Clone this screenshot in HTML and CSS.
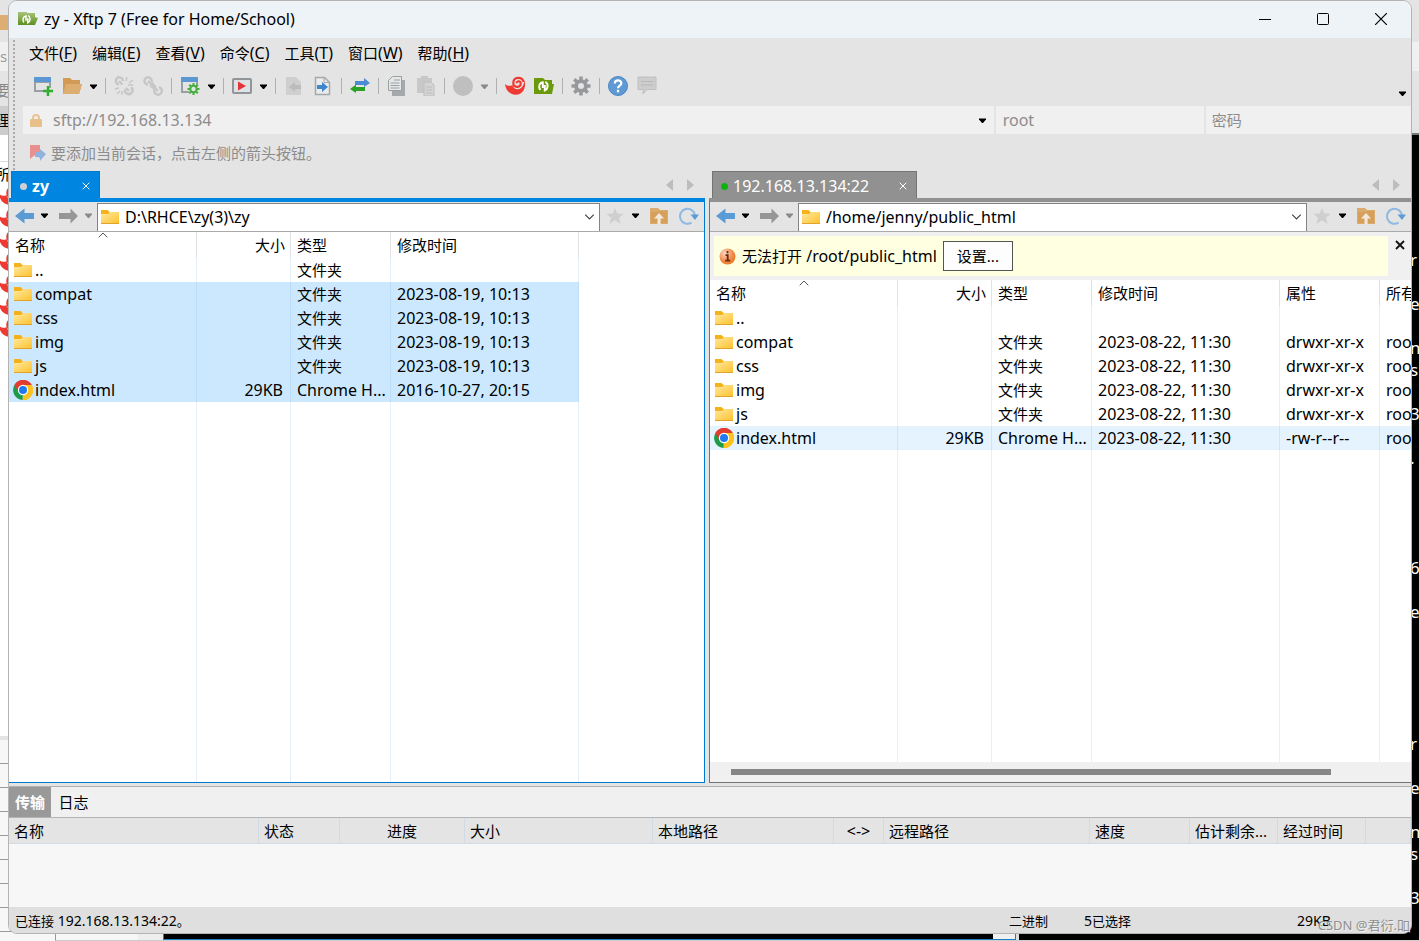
FILE: index.html
```html
<!DOCTYPE html>
<html lang="zh-CN">
<head>
<meta charset="utf-8">
<title>zy - Xftp 7 (Free for Home/School)</title>
<link rel="stylesheet" href="styles.css">
</head>
<body>
<svg class="defs" aria-hidden="true">
  <defs>
    <linearGradient id="fg" x1="0" y1="0" x2="1" y2="1"><stop offset="0" stop-color="#ffe9a3"/><stop offset="1" stop-color="#fdc32f"/></linearGradient>
    <radialGradient id="og" cx=".35" cy=".3" r=".8"><stop offset="0" stop-color="#ffd9c4"/><stop offset=".6" stop-color="#f08a4a"/><stop offset="1" stop-color="#e8761a"/></radialGradient>
    <linearGradient id="gg" x1="0" y1="0" x2="0" y2="1"><stop offset="0" stop-color="#a9c47a"/><stop offset="1" stop-color="#5f8f23"/></linearGradient>
  </defs>
  <symbol id="folder" viewBox="0 0 18 14"><path d="M0 0h6.500l2 2H18v11.500H0z" fill="#f6b21b"/><path d="M0 4h7l2-2h9v11H0z" fill="url(#fg)"/><path d="M0 13h18v1H0z" fill="#e3a32a"/></symbol>
  <symbol id="chrome" viewBox="0 0 20 20"><path d="M10 10 1.500 5A10 10 0 0 1 18.700 5z" fill="#e33b2e"/><path d="M10 10 18.700 5A10 10 0 0 1 9.600 20z" fill="#fcc31e"/><path d="M10 10 9.600 20A10 10 0 0 1 1.400 5z" fill="#1e9b48"/><path d="M10 5h8.700A10 10 0 0 1 9.600 20l4.700-7.500z" fill="#fcc31e"/><path d="M1.400 5 5.700 12.500A5 5 0 0 1 10 5h8.700A10 10 0 0 0 1.400 5z" fill="#e33b2e"/><circle cx="10" cy="10" r="5.200" fill="#fff"/><circle cx="10" cy="10" r="4" fill="#2079ee"/></symbol>
  <symbol id="back" viewBox="0 0 19 16"><path d="M0 8 9.500.500V5H19v6H9.500v4.500z" fill="currentColor"/></symbol>
  <symbol id="forward" viewBox="0 0 19 16"><path d="M19 8 11.500 .5V5H0v6h11.500v4.500z" fill="currentColor"/></symbol>
  <symbol id="caret" viewBox="0 0 7 5"><path d="M0 .5h7v1L4 5H3L0 1.500z" fill="currentColor"/></symbol>
  <symbol id="chev" viewBox="0 0 10 6"><path d="m.7.7 4.300 4.300L9.300.7" fill="none" stroke="#444" stroke-width="1.200"/></symbol>
  <symbol id="star" viewBox="0 0 18 16"><path d="m9 0 2.400 5.500 6.300.3-4.700 3.900L14.600 16 9 12.300 3.400 16 5 9.700.3 5.800l6.300-.3z" fill="#cfcfcf"/></symbol>
  <symbol id="upfolder" viewBox="0 0 18 16"><path d="M0 0h8l2 2h8v14H0z" fill="#d9ab6c"/><path d="M1 4h7l2-1h7v12H1z" fill="#d6a05a"/><path d="m9 5 5 5.500h-3.400V16H7.500v-5.500H4z" fill="#f1e9de"/></symbol>
  <symbol id="refresh" viewBox="0 0 20 18"><path d="M12.500 15.700A7.500 7.500 0 1 1 16 8.500" fill="none" stroke="#8db9e2" stroke-width="2"/><path d="M11.500 7.500H20L16 13z" fill="#5a9ad6"/></symbol>
  <symbol id="swirl" viewBox="0 0 20 20"><path d="M0 8c2 2 5 2.500 7.500 1 .5 4 5 5.500 8.500 3 2-1.500 3-4 3.500-8 1.500 6 0 11-4 13.500C9.500 21 1 17.500 0 8z" fill="#ee3a32"/><path d="M18.500 6C17.500.500 8.500 0 8.300 7c0 5 7.400 5.300 7.400.7 0-3.200-4-3.200-4-.4" fill="none" stroke="#ee3a32" stroke-width="2.200"/></symbol>
  <symbol id="greenfolder" viewBox="0 0 20 18"><path d="M0 1h9l2 2h7v4h2l-2 10H0z" fill="#6a9a0c"/><path d="M6.300 13C4 9.500 5.300 5.800 8.800 5.300V11M11.500 4.800C14.800 7.500 14 12 10.800 13.500V8" fill="none" stroke="#fff" stroke-width="1.900"/></symbol>
  <symbol id="gear" viewBox="0 0 20 20"><g stroke="currentColor" stroke-width="3.500"><path d="M10 .5v19M.5 10h19M3.300 3.300l13.400 13.400M16.700 3.300 3.300 16.700"/></g><circle cx="10" cy="10" r="6.800" fill="currentColor"/><circle cx="10" cy="10" r="3" fill="#e4e4e4"/></symbol>
  <symbol id="tri-l" viewBox="0 0 7 12"><path d="M7 0v12L0 6z" fill="#bdbdbd"/></symbol>
  <symbol id="tri-r" viewBox="0 0 7 12"><path d="M0 0v12L7 6z" fill="#bdbdbd"/></symbol>
  <symbol id="x" viewBox="0 0 8 8"><path d="m.7.7 6.600 6.600M7.300.7.7 7.300" fill="none" stroke="currentColor"/></symbol>
  <symbol id="up" viewBox="0 0 10 6"><path d="M.7 5.300 5 1l4.300 4.300" fill="none" stroke="#555"/></symbol>
</svg>

<div class="desktop">
  <div class="behind-left" aria-hidden="true">
    <i class="bl-folder"></i><span class="bl-s">s</span><span class="bl-yao">要</span><span class="bl-li">理</span><span class="bl-suo">所</span>
    <div class="swirls">
      <svg><use href="#swirl"/></svg><svg><use href="#swirl"/></svg><svg><use href="#swirl"/></svg><svg><use href="#swirl"/></svg><svg><use href="#swirl"/></svg><svg><use href="#swirl"/></svg><svg><use href="#swirl"/></svg>
    </div>
    <div class="bl-lines"></div>
  </div>
  <div class="behind-right" aria-hidden="true">
    <pre class="term">r

e

n
s

3

.




6

e





r

e

n
s

3</pre>
  </div>
  <div class="behind-bottom" aria-hidden="true"><i class="bb-a"></i><i class="bb-b"></i><i class="bb-c"></i><i class="bb-d"></i></div>

  <main class="window">
    <header class="titlebar">
      <svg class="appicon" viewBox="0 0 20 16"><path d="M0 1h8l2 1h7v4l3 1-3 7H0z" fill="url(#gg)"/><path d="M5.800 11.500C4 8.500 5.200 5.500 8 5v4.800M10.200 4.500C13 6.800 12.500 10.500 9.800 11.800V7.200" fill="none" stroke="#fff" stroke-width="1.500"/></svg>
      <h1>zy - Xftp 7 (Free for Home/School)</h1>
      <div class="winbtns">
        <button aria-label="最小化"><svg viewBox="0 0 12 12"><path d="M0 6.500h12" stroke="#000"/></svg></button>
        <button aria-label="最大化"><svg viewBox="0 0 12 12"><rect x=".5" y=".5" width="11" height="11" rx="1" fill="none" stroke="#000"/></svg></button>
        <button aria-label="关闭"><svg viewBox="0 0 12 12"><path d="m0 0 12 12M12 0 0 12" stroke="#000" stroke-width="1.200"/></svg></button>
      </div>
    </header>

    <div class="bars">
      <nav class="menu">
        <button><span class="zh">文件</span>(<u>F</u>)</button><button><span class="zh">编辑</span>(<u>E</u>)</button><button><span class="zh">查看</span>(<u>V</u>)</button><button><span class="zh">命令</span>(<u>C</u>)</button><button><span class="zh">工具</span>(<u>T</u>)</button><button><span class="zh">窗口</span>(<u>W</u>)</button><button><span class="zh">帮助</span>(<u>H</u>)</button>
      </nav>
      <div class="toolbar">
        <div class="group">
          <button aria-label="新建"><svg viewBox="0 0 20 20"><path d="M2 1v14h9M17 6v6M2 6h15" fill="none" stroke="#9a9fa3" stroke-width="2"/><path d="M1 1h17v5H1z" fill="#5b97d3"/><path d="M15 10v10M10 15h10" stroke="#2fae2f" stroke-width="2.500"/></svg></button>
          <button aria-label="打开"><svg viewBox="0 0 20 20"><path d="M1 2h7l2 2h8v4h2l-3 10H1z" fill="#d39a56"/><path d="M4 8h16l-3 10H1z" fill="#dcae72"/></svg></button>
          <button class="drop" aria-label="打开列表"><svg><use href="#caret"/></svg></button>
        </div>
        <div class="group">
          <button aria-label="断开"><svg viewBox="0 0 20 20"><g fill="none" stroke="#c6c6c6" stroke-width="2.400"><path d="M9 5A3.600 3.600 0 1 0 5 8.500M11 13.500a3.800 3.800 0 1 0 6-2.200M5 5l3.500 3.500M12 12l3 3"/><path d="m13 1-1 4M19 4l-4 3M14 9h5M1 13l4-1M3 18l3-3M8 19v-4" stroke-width="1.500"/></g></svg></button>
          <button aria-label="连接"><svg viewBox="0 0 20 20"><g fill="none" stroke="#c6c6c6" stroke-width="2.400"><path d="M8.500 6A3.600 3.600 0 1 0 5 8.500M11.500 13.500a3.800 3.800 0 1 0 4.500-2.300M5 5l10 10"/><path d="M6.500 9.500 11 13M9 6.500l4 4.500" stroke-width="1.500"/></g></svg></button>
        </div>
        <div class="group">
          <button aria-label="属性"><svg viewBox="0 0 20 20"><path d="M2 1v15h7M17 6v4" fill="none" stroke="#9a9fa3" stroke-width="2"/><path d="M1 1h17v5H1z" fill="#5b97d3"/><g stroke="#42b03c" stroke-width="2"><path d="M13.500 7v12M7.500 13h12M9.300 8.800l8.500 8.500M17.800 8.800l-8.500 8.500"/></g><circle cx="13.500" cy="13" r="3.200" fill="#e4e4e4" stroke="#42b03c" stroke-width="2"/></svg></button>
          <button class="drop" aria-label="属性列表"><svg><use href="#caret"/></svg></button>
        </div>
        <div class="group">
          <button aria-label="执行"><svg viewBox="0 0 20 20"><rect x="1" y="3" width="18" height="14" rx="1" fill="#dfe2e4" stroke="#8f9598" stroke-width="2"/><path d="M6 5.500 14 10l-8 4.500z" fill="#e3343a"/></svg></button>
          <button class="drop" aria-label="执行列表"><svg><use href="#caret"/></svg></button>
        </div>
        <div class="group">
          <button aria-label="下载"><svg viewBox="0 0 20 20"><path d="M2 1h10l5 5v13H2z" fill="#cfcfcf"/><path d="m5 11 6-5v3h6v4h-6v3z" fill="#bcbcbc"/></svg></button>
          <button aria-label="上传"><svg viewBox="0 0 20 20"><path d="M2.500 1.500h9l5 5v12h-14z" fill="#e9ebec" stroke="#a3a8ab" stroke-width="1.500"/><path d="M11 1.500v5h5" fill="none" stroke="#a3a8ab"/><path d="m15 11-6-5v3H4v4h5v3z" fill="#3f86d0"/></svg></button>
        </div>
        <div class="group">
          <button aria-label="同步"><svg viewBox="0 0 20 20"><path d="M5 5h9V2l6 5-6 4V9H5z" fill="#4a8bd4"/><path d="M15 11H6V8.500L0 13l6 4v-2h9z" fill="#2da127"/></svg></button>
        </div>
        <div class="group">
          <button aria-label="复制"><svg viewBox="0 0 20 20"><path d="M5 4h13v16H5z" fill="#a5a9ac"/><path d="M5.500.5h9v14h-13v-10z" fill="#e6e7e8" stroke="#9a9fa2"/><path d="M3.500 7h9M3.500 9.500h9M3.500 12h9M7 4h6" stroke="#9a9fa2"/></svg></button>
          <button aria-label="粘贴"><svg viewBox="0 0 20 20"><path d="M1 2h4V0h7v2h4v15H1z" fill="#c8c8c8"/><path d="M8 6h7l3 3v11H8z" fill="#d4d4d4" stroke="#bebebe"/><path d="M10 11h6M10 14h6M10 17h6" stroke="#bebebe"/></svg></button>
        </div>
        <div class="group">
          <button aria-label="停止"><svg viewBox="0 0 20 20"><circle cx="10" cy="10" r="10" fill="#bfbfbf"/></svg></button>
          <button class="drop dim" aria-label="停止列表"><svg><use href="#caret"/></svg></button>
        </div>
        <div class="group">
          <button aria-label="Xshell"><svg><use href="#swirl"/></svg></button>
          <button aria-label="Xftp"><svg><use href="#greenfolder"/></svg></button>
        </div>
        <div class="group">
          <button class="gearbtn" aria-label="选项"><svg><use href="#gear"/></svg></button>
        </div>
        <div class="group">
          <button aria-label="帮助"><svg viewBox="0 0 20 20"><circle cx="10" cy="10" r="9.500" fill="#5f9ad4" stroke="#4a86c4"/><path d="M6.800 7.500c0-4.200 6.500-4 6.500-.3 0 2.500-3.300 2.300-3.300 5M10 13.800v2.400" fill="none" stroke="#fff" stroke-width="2.200"/></svg></button>
          <button aria-label="反馈"><svg viewBox="0 0 20 20"><path d="M1 1h18v12.500h-9L6 18v-4.500H1z" fill="#cdcdcd" stroke="#c0c0c0"/><path d="M4 5.500h12M4 9h12" stroke="#b8b8b8"/></svg></button>
        </div>
        <button class="drop more" aria-label="更多"><svg><use href="#caret"/></svg></button>
      </div>
      <div class="address">
        <div class="field host">
          <svg class="lock" viewBox="0 0 12 13"><path d="M3 6V4a3 3 0 0 1 6 0v2" fill="none" stroke="#e8c394" stroke-width="2"/><rect y="5" width="12" height="8" rx="1" fill="#e8c08a"/></svg>
          <input aria-label="地址" value="sftp://192.168.13.134">
          <button class="drop" aria-label="地址列表"><svg><use href="#caret"/></svg></button>
        </div>
        <div class="field user"><input aria-label="用户名" value="root"></div>
        <div class="field pass"><input class="zh" aria-label="密码" placeholder="密码"></div>
      </div>
      <div class="bookmark">
        <svg viewBox="0 0 16 16"><path d="M0 0h10v13l-5-3-5 4z" fill="#e98f8f"/><path d="m16 9-6-5v3H5v5h5v4z" fill="#8fb3dc"/></svg>
        <span class="zh">要添加当前会话，点击左侧的箭头按钮。</span>
      </div>
    </div>

    <div class="panes">
      <section class="pane local">
        <div class="tabs">
          <div class="tab"><i class="dot"></i><b>zy</b><button aria-label="关闭标签"><svg><use href="#x"/></svg></button></div>
          <div class="scrollers"><button aria-label="向左"><svg><use href="#tri-l"/></svg></button><button aria-label="向右"><svg><use href="#tri-r"/></svg></button></div>
        </div>
        <div class="body">
          <div class="nav">
            <div class="history"><button class="back" aria-label="后退"><svg><use href="#back"/></svg></button><button class="drop" aria-label="后退列表"><svg><use href="#caret"/></svg></button><button class="fwd" aria-label="前进"><svg><use href="#forward"/></svg></button><button class="drop dim" aria-label="前进列表"><svg><use href="#caret"/></svg></button></div>
            <div class="path"><svg class="fold"><use href="#folder"/></svg><input aria-label="本地路径" value="D:\RHCE\zy(3)\zy"><button aria-label="路径列表"><svg><use href="#chev"/></svg></button></div>
            <div class="tools"><button class="star" aria-label="收藏"><svg><use href="#star"/></svg></button><button class="drop" aria-label="收藏列表"><svg><use href="#caret"/></svg></button><button class="upf" aria-label="上一级"><svg><use href="#upfolder"/></svg></button><button class="ref" aria-label="刷新"><svg><use href="#refresh"/></svg></button></div>
          </div>
          <div class="list">
            <table class="files">
              <colgroup><col class="c-name"><col class="c-size"><col class="c-type"><col class="c-time"><col></colgroup>
              <thead><tr class="zh"><th>名称<svg class="sort"><use href="#up"/></svg></th><th class="num">大小</th><th>类型</th><th>修改时间</th><th class="end"></th></tr></thead>
              <tbody>
                <tr><td><div class="file"><svg class="fold"><use href="#folder"/></svg>..</div></td><td></td><td class="zh">文件夹</td><td></td><td class="end"></td></tr>
                <tr class="sel"><td><div class="file"><svg class="fold"><use href="#folder"/></svg>compat</div></td><td></td><td class="zh">文件夹</td><td>2023-08-19, 10:13</td><td class="end"></td></tr>
                <tr class="sel"><td><div class="file"><svg class="fold"><use href="#folder"/></svg>css</div></td><td></td><td class="zh">文件夹</td><td>2023-08-19, 10:13</td><td class="end"></td></tr>
                <tr class="sel"><td><div class="file"><svg class="fold"><use href="#folder"/></svg>img</div></td><td></td><td class="zh">文件夹</td><td>2023-08-19, 10:13</td><td class="end"></td></tr>
                <tr class="sel"><td><div class="file"><svg class="fold"><use href="#folder"/></svg>js</div></td><td></td><td class="zh">文件夹</td><td>2023-08-19, 10:13</td><td class="end"></td></tr>
                <tr class="sel"><td><div class="file"><svg class="chr"><use href="#chrome"/></svg>index.html</div></td><td class="num">29KB</td><td>Chrome H...</td><td>2016-10-27, 20:15</td><td class="end"></td></tr>
                <tr class="fill"><td></td><td></td><td></td><td></td><td class="end"></td></tr>
              </tbody>
            </table>
          </div>
        </div>
      </section>

      <section class="pane remote">
        <div class="tabs">
          <div class="tab"><i class="dot"></i><span>192.168.13.134:22</span><button aria-label="关闭标签"><svg><use href="#x"/></svg></button></div>
          <div class="scrollers"><button aria-label="向左"><svg><use href="#tri-l"/></svg></button><button aria-label="向右"><svg><use href="#tri-r"/></svg></button></div>
        </div>
        <div class="body">
          <div class="nav">
            <div class="history"><button class="back" aria-label="后退"><svg><use href="#back"/></svg></button><button class="drop" aria-label="后退列表"><svg><use href="#caret"/></svg></button><button class="fwd" aria-label="前进"><svg><use href="#forward"/></svg></button><button class="drop dim" aria-label="前进列表"><svg><use href="#caret"/></svg></button></div>
            <div class="path"><svg class="fold"><use href="#folder"/></svg><input aria-label="远程路径" value="/home/jenny/public_html"><button aria-label="路径列表"><svg><use href="#chev"/></svg></button></div>
            <div class="tools"><button class="star" aria-label="收藏"><svg><use href="#star"/></svg></button><button class="drop" aria-label="收藏列表"><svg><use href="#caret"/></svg></button><button class="upf" aria-label="上一级"><svg><use href="#upfolder"/></svg></button><button class="ref" aria-label="刷新"><svg><use href="#refresh"/></svg></button></div>
          </div>
          <div class="notice">
            <div class="msg">
              <svg viewBox="0 0 17 17"><circle cx="8.500" cy="8.500" r="8" fill="url(#og)"/><path d="M8.500 3v2.300M6.500 7.200h2.200v5.300M6.200 12.700h5" stroke="#6b2a10" stroke-width="1.800" fill="none"/></svg>
              <span><span class="zh">无法打开</span> /root/public_html</span>
              <button class="zh">设置...</button>
            </div>
            <button class="close" aria-label="关闭提示"><svg viewBox="0 0 10 10"><path d="m1 1 8 8M9 1 1 9" stroke="#111" stroke-width="1.800"/></svg></button>
          </div>
          <div class="list">
            <table class="files">
              <colgroup><col class="c-name"><col class="c-size"><col class="c-type"><col class="c-time"><col class="c-type"><col></colgroup>
              <thead><tr class="zh"><th>名称<svg class="sort"><use href="#up"/></svg></th><th class="num">大小</th><th>类型</th><th>修改时间</th><th>属性</th><th class="end">所有者</th></tr></thead>
              <tbody>
                <tr><td><div class="file"><svg class="fold"><use href="#folder"/></svg>..</div></td><td></td><td></td><td></td><td></td><td class="end"></td></tr>
                <tr><td><div class="file"><svg class="fold"><use href="#folder"/></svg>compat</div></td><td></td><td class="zh">文件夹</td><td>2023-08-22, 11:30</td><td>drwxr-xr-x</td><td class="end">root</td></tr>
                <tr><td><div class="file"><svg class="fold"><use href="#folder"/></svg>css</div></td><td></td><td class="zh">文件夹</td><td>2023-08-22, 11:30</td><td>drwxr-xr-x</td><td class="end">root</td></tr>
                <tr><td><div class="file"><svg class="fold"><use href="#folder"/></svg>img</div></td><td></td><td class="zh">文件夹</td><td>2023-08-22, 11:30</td><td>drwxr-xr-x</td><td class="end">root</td></tr>
                <tr><td><div class="file"><svg class="fold"><use href="#folder"/></svg>js</div></td><td></td><td class="zh">文件夹</td><td>2023-08-22, 11:30</td><td>drwxr-xr-x</td><td class="end">root</td></tr>
                <tr class="hot"><td><div class="file"><svg class="chr"><use href="#chrome"/></svg>index.html</div></td><td class="num">29KB</td><td>Chrome H...</td><td>2023-08-22, 11:30</td><td>-rw-r--r--</td><td class="end">root</td></tr>
                <tr class="fill"><td></td><td></td><td></td><td></td><td></td><td class="end"></td></tr>
              </tbody>
            </table>
          </div>
          <div class="hscroll"><div class="thumb"></div></div>
        </div>
      </section>
    </div>

    <section class="transfer">
      <div class="ttabs zh"><button class="on">传输</button><button>日志</button></div>
      <table class="queue">
        <colgroup><col class="q1"><col class="q2"><col class="q3"><col class="q4"><col class="q5"><col class="q6"><col class="q7"><col class="q8"><col class="q9"><col class="q9"><col></colgroup>
        <thead><tr class="zh"><th>名称</th><th>状态</th><th class="mid">进度</th><th>大小</th><th>本地路径</th><th class="mid swap">&lt;-&gt;</th><th>远程路径</th><th>速度</th><th>估计剩余...</th><th>经过时间</th><th></th></tr></thead>
      </table>
    </section>
    <footer class="status">
      <span class="st-main"><span class="zh">已连接</span> 192.168.13.134:22<span class="zh">。</span></span>
      <span class="st-mode"><span class="zh">二进制</span></span>
      <span class="st-sel">5<span class="zh">已选择</span></span>
      <span class="st-size">29KB</span>
    </footer>
  </main>
  <div class="watermark">CSDN @君衍.吅</div>
</div>
</body>
</html>
```
FILE: styles.css
```css
* { box-sizing: border-box; }
body {
  margin: 0;
  font: 16px/24px "Noto Sans", "Noto Sans CJK SC", sans-serif;
  color: #000;
  background: #fff;
}
button, input { font: inherit; color: inherit; border: 0; background: none; padding: 0; margin: 0; }
input { min-width: 0; outline: none; }
svg { display: block; }
.defs { position: absolute; width: 0; height: 0; }
.zh { font-size: 15px; }

.desktop {
  position: relative;
  display: flex;
  height: 100vh;
  min-height: 600px;
  padding: 0 7px 7px 8px;
  overflow: hidden;
}

/* strips of the windows behind */
.behind-left {
  position: absolute; left: 0; top: 0; bottom: 0; width: 60px; overflow: hidden;
  background: linear-gradient(#e4e4e4 42px, #f0f0f0 42px 71px, #e4e4e4 71px 106px, #ccc 106px 135px, #fff 135px 161px, #ddd 161px 162px, #fff 162px 736px, #e4e4e4 736px 740px, #f7f7f7 740px);
}
.behind-left span { position: absolute; left: -5px; font-size: 15px; }
.behind-left .bl-s { left: 0; top: 44px; color: #999; }
.behind-left .bl-yao { top: 78px; color: #888; }
.bl-li { top: 108px; }
.bl-suo { top: 162px; }
.bl-folder { position: absolute; left: 0; top: 15px; width: 9px; height: 15px; background: #dcae72; }
.swirls { position: absolute; left: -1px; top: 186px; display: grid; gap: 2px; }
.swirls svg { width: 20px; height: 20px; }
.bl-lines { position: absolute; left: 0; right: 0; top: 740px; bottom: 0; background: repeating-linear-gradient(transparent 0 23px, #999 23px 24px); }
.behind-right {
  position: absolute; right: 0; top: 0; bottom: 0; width: 20px; overflow: hidden;
  background: linear-gradient(#e4e4e4 42px, #f0f0f0 42px 71px, #e4e4e4 71px 133px, #777 133px 135px, #000 135px);
}
.term { position: absolute; left: 11px; top: 249px; margin: 0; font: 17px/22px "Noto Sans", sans-serif; color: #fff; }
.behind-bottom {
  position: absolute; left: 55px; right: 0; bottom: 0; height: 20px; display: flex;
  border-left: 1px solid #999; border-bottom: 1px solid #ccc; background: #f7f7f7;
}
.bb-a { width: 107px; background: linear-gradient(90deg, #f7f7f7 82px, #eee 82px); }
.bb-b { flex: 830; background: #000; border: solid #1a7fc4; border-width: 0 0 1px 1px; }
.bb-c { flex: 22; background: #f0f0f0; border: solid #1a7fc4; border-width: 0 1px 1px 0; }
.bb-d { flex: 400; background: #000; border-left: 3px solid #ddd; }

.window {
  position: relative;
  flex: 1;
  min-width: 0;
  display: flex;
  flex-direction: column;
  border: 1px solid #b4b4b4;
  border-radius: 9px;
  overflow: hidden;
  background: #e4e4e4;
}
.titlebar { display: flex; align-items: center; height: 37px; padding: 0 0 2px 9px; background: #eef3f8; }
.appicon { width: 20px; height: 16px; margin-right: 6px; }
h1 { flex: 1; margin: 0; font-size: 16px; font-weight: 400; }
.winbtns { display: flex; padding-right: 1px; }
.winbtns button { width: 58px; height: 34px; display: grid; place-items: center; }
.winbtns svg { width: 12px; height: 12px; }

.bars { padding-left: 14px; background: radial-gradient(circle at 1px 1px, #aaa 1px, transparent 1px) 4px 2px / 3px 4px repeat-y; }
.menu { display: flex; gap: 15px; padding: 3px 0 1px 6px; }
.menu u { text-underline-offset: 2px; }
.toolbar { display: flex; align-items: center; height: 40px; }
.group { display: flex; align-items: center; gap: 8px; padding-left: 8px; margin-right: 8px; border-left: 1px solid #b0b0b0; height: 16px; }
.group:first-child { border-left-color: transparent; padding-left: 9px; }
.group > button + button:not(.drop) { margin-left: 1px; }
.toolbar svg { width: 20px; height: 20px; }
.gearbtn { color: #96999c; }
.drop svg, .toolbar .drop svg { width: 7px; height: 5px; }
.dim { color: #8a8a8a; }
.more { margin: 14px 5px 0 auto; }

.address { display: grid; grid-template-columns: 970fr 208fr 205fr; gap: 2px; color: #8c8c8c; }
.field { min-width: 0; display: flex; align-items: center; height: 28px; background: #f0f0f0; padding: 0 7px; }
.field input { flex: 1; width: 100%; }
.field .drop { color: #000; margin-right: 1px; }
.pass { padding-left: 6px; }
.pass input::placeholder { color: #8c8c8c; opacity: 1; }
.lock { width: 12px; height: 13px; margin-right: 11px; }
.bookmark { display: flex; align-items: center; gap: 5px; height: 37px; padding-left: 7px; color: #8c8c8c; }
.bookmark svg { width: 16px; height: 16px; }

.panes { flex: 1; min-height: 0; display: grid; grid-template-columns: 696fr 702fr; gap: 4px; padding-bottom: 3px; }
.pane { min-width: 0; min-height: 0; display: flex; flex-direction: column; --accent: #0086e0; --edge: #0078d0; }
.remote { --accent: #919191; --edge: #747474; }
.tabs { display: flex; justify-content: space-between; padding-left: 2px; }
.remote .tabs { padding-left: 3px; }
.tab { display: flex; align-items: center; width: 89px; height: 27px; padding: 2px 9px 0 8px; background: var(--accent); border: 1px solid var(--edge); border-bottom: 0; color: #fff; }
.remote .tab { width: 205px; }
.dot { width: 7px; height: 7px; border-radius: 50%; background: #d0d0d0; margin-right: 5px; }
.remote .dot { background: #0eb10e; }
.tab button { margin-left: auto; }
.tab svg { width: 8px; height: 8px; }
.scrollers { display: flex; gap: 14px; padding-right: 11px; align-items: center; }
.scrollers svg { width: 7px; height: 12px; }
.body { flex: 1; min-height: 0; display: flex; flex-direction: column; border: 1px solid var(--edge); border-top: 4px solid var(--accent); border-left: 0; }
.remote .body { border-left: 1px solid var(--edge); border-right: 0; }
.nav { display: flex; height: 30px; border-bottom: 1px solid #aaa; }
.history { display: flex; align-items: center; width: 88px; padding: 0 0 2px 6px; gap: 7px; }
.history .fwd { margin-left: 4px; }
.back { color: #5b9bd5; }
.fwd { color: #969696; }
.back svg, .fwd svg { width: 19px; height: 16px; }
.path { flex: 1; min-width: 0; display: flex; align-items: center; margin-top: 1px; padding: 0 4px 1px 3px; background: #fff; border: 1px solid #848484; border-bottom: 0; }
.fold { width: 18px; height: 14px; margin-right: 3px; flex: none; }
.path .fold { margin-right: 6px; }
.path input { flex: 1; }
.path button svg { width: 11px; height: 6px; }
.tools { display: flex; align-items: center; width: 104px; padding: 0 0 2px 6px; gap: 8px; }
.star svg, .upf svg { width: 18px; height: 16px; }
.upf { margin-left: 3px; }
.ref { margin-left: 3px; }
.ref svg { width: 20px; height: 18px; }

.notice { display: flex; background: #f0f0f0; padding: 4px 0 4px 4px; }
.msg { flex: 1; display: flex; align-items: center; height: 40px; padding-left: 5px; background: #ffffe1; }
.msg svg { width: 17px; height: 17px; margin-right: 6px; }
.msg button { width: 70px; height: 30px; margin-left: 6px; background: #fdfdfd; border: 1px solid #555; }
.close { width: 23px; display: flex; justify-content: center; align-items: flex-start; padding-top: 4px; }
.close svg { width: 10px; height: 10px; }

.list { flex: 1; min-height: 0; overflow: hidden; background: #fff; }
table { border-collapse: separate; border-spacing: 0; table-layout: fixed; width: 100%; text-align: left; }
.files { height: 100%; }
th, td { font-weight: 400; padding: 0 6px; white-space: nowrap; overflow: hidden; }
.files th, .files td { border-right: 1px solid #e6f0fa; height: 24px; }
.files th { height: 26px; border-color: #e2e2e2; position: relative; }
.files .end { border-right: 0; }
.files .fill td { height: auto; }
.files .num { text-align: right; padding: 0 5px; }
.files td.num { padding: 0 7px; }
.files td:first-child { padding: 0 5px; }
.c-name { width: 188px; }
.c-size { width: 94px; }
.c-type { width: 100px; }
.c-time { width: 188px; }
.sort { position: absolute; left: 89px; top: 0; width: 10px; height: 6px; }
.file { display: flex; align-items: center; }
.chr { width: 20px; height: 20px; margin: 0 2px 0 -1px; }
.sel td:not(.end) { background: #cce8ff; border-color: #bcdcf8; }
.hot td { background: #e5f3ff; border-color: #d0e6f8; }
.hscroll { height: 20px; background: #f0f0f0; display: flex; align-items: center; padding: 0 80px 0 21px; }
.thumb { flex: 1; height: 6px; background: #868686; }

.transfer { height: 121px; background: #f7f7f7; border-top: 1px solid #b0b0b0; }
.ttabs { display: flex; height: 31px; background: #f0f0f0; border-bottom: 1px solid #b4b4b4; }
.ttabs button { width: 42px; }
.ttabs button + button { width: 45px; }
.ttabs .on { background: #999; color: #fff; font-weight: 700; }
.queue th { height: 26px; background: #e4e4e4; border: solid #d2dae4; border-width: 0 1px 1px 0; padding: 0 5px; }
.queue .mid { text-align: center; }
.queue .swap { font-size: 16px; }
.q1 { width: 250px; } .q2 { width: 81px; } .q3 { width: 125px; } .q4 { width: 188px; } .q5 { width: 181px; }
.q6 { width: 50px; } .q7 { width: 206px; } .q8 { width: 100px; } .q9 { width: 88px; }

.status { display: flex; align-items: center; height: 26px; padding: 2px 0 0 6px; background: #dfdfdf; font-size: 14px; }
.status .zh { font-size: 13px; }
.st-main { flex: 1; }
.st-mode { width: 75px; }
.st-sel { width: 213px; }
.st-size { width: 114px; }
.watermark { position: absolute; right: 9px; bottom: 4px; font-size: 13px; color: #8f8f8f; text-shadow: 1px 1px 0 #eee; }
```
